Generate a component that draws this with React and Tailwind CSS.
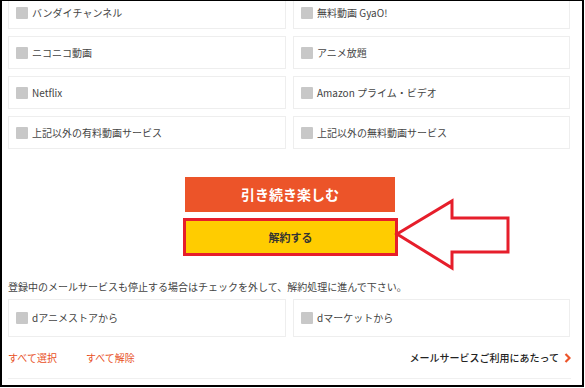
import React from "react";

const font = { fontFamily: '"Noto Sans CJK JP", "Noto Sans", sans-serif' };

const videoServices = [
  ["バンダイチャンネル", "無料動画 GyaO!"],
  ["ニコニコ動画", "アニメ放題"],
  ["Netflix", "Amazon プライム・ビデオ"],
  ["上記以外の有料動画サービス", "上記以外の無料動画サービス"],
];

function CheckCard({ label, tall }) {
  return (
    <div
      className={`flex items-center gap-[4px] border border-[#eeeeee] bg-white pl-[7px] ${
        tall ? "h-[38px]" : "h-[33px]"
      }`}
    >
      <span className="w-[12px] h-[12px] rounded-[1px] bg-[#c8c8c8] shrink-0" />
      <span className="text-[10px] leading-none text-[#444]">{label}</span>
    </div>
  );
}

function App() {
  return (
    <div
      className="relative w-[584px] h-[387px] overflow-hidden bg-white border-2 border-t border-black"
      style={font}
    >
      <div className="pl-[6px] pr-[11px]">
        {/* video services */}
        <div className="-mt-[5px] grid grid-cols-[278px_277px] gap-x-[7px] gap-y-[7px]">
          {videoServices.map(([a, b]) => (
            <React.Fragment key={a}>
              <CheckCard label={a} />
              <CheckCard label={b} />
            </React.Fragment>
          ))}
        </div>

        {/* buttons */}
        <div className="mt-[28px] flex flex-col items-center">
          <button
            type="button"
            className="w-[210px] h-[35px] bg-[#ec5429] text-white text-[14px] font-bold ml-[1px]"
          >
            引き続き楽しむ
          </button>
          <button
            type="button"
            className="mt-[6px] w-[215px] h-[38px] bg-[#ffcc00] border-[3px] border-[#e61e2b] text-[#333] text-[11px] font-bold ml-[2px]"
          >
            解約する
          </button>
        </div>

        <p className="mt-[24px] text-[10px] leading-[14px] text-[#444]">
          登録中のメールサービスも停止する場合はチェックを外して、解約処理に進んで下さい。
        </p>

        <div className="mt-[5px] grid grid-cols-[278px_277px] gap-x-[7px]">
          <CheckCard label="dアニメストアから" tall />
          <CheckCard label="dマーケットから" tall />
        </div>

        {/* links */}
        <div className="mt-[14px] flex items-center">
          <a className="text-[10px] leading-[14px] text-[#e8501e]">すべて選択</a>
          <a className="ml-[29px] text-[10px] leading-[14px] text-[#e8501e]">すべて解除</a>
          <a className="ml-auto flex items-center gap-[5px] text-[10px] leading-[14px] font-medium text-[#222]">
            メールサービスご利用にあたって
            <svg width="7" height="10" viewBox="0 0 7 10">
              <path d="M1.5 1 L5.5 5 L1.5 9" fill="none" stroke="#ec5429" strokeWidth="2.2" />
            </svg>
          </a>
        </div>

        <div className="mt-[13px] h-px bg-[#f0f0f0]" />
      </div>

      {/* annotation arrow */}
      <svg
        className="absolute left-[-2px] top-[-1px] pointer-events-none"
        width="585"
        height="388"
        viewBox="0 0 585 388"
      >
        <polygon
          points="397,234 452,201 452,218 508,218 508,252 452,252 452,268"
          fill="white"
          stroke="#e61e2b"
          strokeWidth="3"
          strokeLinejoin="miter"
        />
      </svg>
    </div>
  );
}

export default App;
